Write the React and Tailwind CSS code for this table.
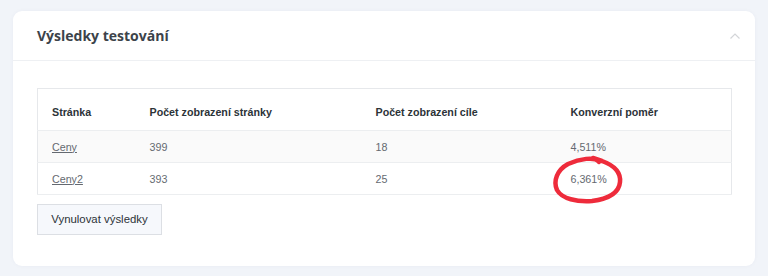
import React from 'react';

const rows = [
    { page: 'Ceny', views: 399, goals: 18, rate: '4,511%' },
    { page: 'Ceny2', views: 393, goals: 25, rate: '6,361%' },
];

// hand-drawn marker loop around a value
function MarkerCircle() {
    return (
        <svg className="absolute left-[-22px] top-[-20px] pointer-events-none" width="78" height="52" viewBox="0 0 78 52" fill="none">
            <path
                d="M50 9 C46 3 30 6 19 11 C8 17 4 28 8 37 C13 46 28 49 43 48 C58 46 70 41 71 29 C72 19 64 12 53 8 L44 5"
                stroke="#ee2b3b"
                strokeWidth="4.5"
                strokeLinecap="round"
                strokeLinejoin="round"
            />
        </svg>
    );
}

export default function App() {
    return (
        <div className="w-[768px] h-[276px] bg-[#f1f4f9] px-[13px] pt-[11px] font-['Liberation_Sans',Arial,sans-serif]">
            <div className="bg-white rounded-[9px] shadow-[0_0_4px_rgba(30,50,90,0.04)]">
                {/* Card header */}
                <div className="h-[50px] flex items-center justify-between pl-[24px] pr-[14px] border-b border-[#eef0f3]">
                    <h2 className="font-['Open_Sans',sans-serif] font-bold text-[14px] text-[#3c434a]">Výsledky testování</h2>
                    <svg width="12" height="8" viewBox="0 0 12 8" fill="none">
                        <polyline points="1.5,6.5 6,2 10.5,6.5" stroke="#d3d5d8" strokeWidth="1.2" />
                    </svg>
                </div>

                {/* Card body */}
                <div className="px-[24px] pt-[27px] pb-[31px]">
                    <table className="w-[694px] table-fixed border-collapse border border-[#e6e8eb] text-[10.7px] leading-[12px]">
                        <colgroup>
                            <col className="w-[98px]" />
                            <col className="w-[226px]" />
                            <col className="w-[195px]" />
                            <col className="w-[175px]" />
                        </colgroup>
                        <thead>
                            <tr className="border-b border-[#eceef0] text-left text-[#2c3338]">
                                <th className="font-bold pl-[14px] pt-[17px] pb-[12px]">Stránka</th>
                                <th className="font-bold pl-[14px] pt-[17px] pb-[12px]">Počet zobrazení stránky</th>
                                <th className="font-bold pl-[14px] pt-[17px] pb-[12px]">Počet zobrazení cíle</th>
                                <th className="font-bold pl-[14px] pt-[17px] pb-[12px]">Konverzní poměr</th>
                            </tr>
                        </thead>
                        <tbody className="text-[#646970]">
                            {rows.map((row, i) => (
                                <tr key={row.page} className={`border-b border-[#eceef0] h-[32px] ${i % 2 === 0 ? 'bg-[#fafafa]' : 'bg-white'}`}>
                                    <td className="pl-[14px]">
                                        <a href="#" className="underline text-[#646970]">{row.page}</a>
                                    </td>
                                    <td className="pl-[14px]">{row.views}</td>
                                    <td className="pl-[14px]">{row.goals}</td>
                                    <td className="pl-[14px]">
                                        <span className="relative inline-block">
                                            {row.rate}
                                            {i === 1 && <MarkerCircle />}
                                        </span>
                                    </td>
                                </tr>
                            ))}
                        </tbody>
                    </table>

                    <button className="mt-[9px] h-[31px] w-[125px] bg-[#f6f8fc] border border-[#dcdfe4] text-[11.4px] text-[#2c3338]">
                        Vynulovat výsledky
                    </button>
                </div>
            </div>
        </div>
    );
}
